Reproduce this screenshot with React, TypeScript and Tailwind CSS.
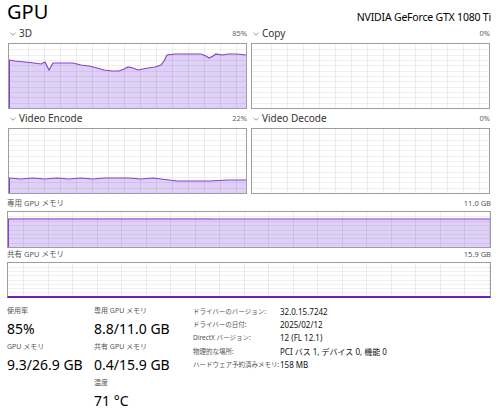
import React from 'react';

type Pt = [number, number];

const FONT = { fontFamily: '"Noto Sans", "Noto Sans CJK JP", sans-serif' };

const pts3d: Pt[] = [
  [0, 16], [6, 17], [16, 18], [25, 19], [32, 20], [36, 18], [40, 26], [44, 19], [56, 19], [64, 19],
  [72, 21], [80, 22], [88, 24], [95, 26], [103, 27], [110, 27], [115, 25], [119, 23], [124, 24],
  [129, 26], [134, 25], [139, 24], [146, 23], [152, 21], [155, 17], [158, 11], [166, 10], [174, 10],
  [182, 10], [192, 10], [197, 12], [200, 14], [204, 12], [207, 10], [213, 11], [219, 10], [228, 10], [237, 11],
];

const ptsEncode: Pt[] = [
  [0, 49], [12, 50], [24, 49], [36, 50], [48, 49], [60, 50], [72, 49], [84, 50], [96, 49], [108, 49],
  [120, 49], [132, 50], [144, 49], [152, 50], [160, 51], [168, 52], [200, 52], [220, 51], [237, 51],
];

interface ChartProps {
  w: number;
  h: number;
  colStep: number;
  colOffset: number;
  rows: number;
  points?: Pt[];
}

const Chart: React.FC<ChartProps> = ({ w, h, colStep, colOffset, rows, points }) => {
  const cols: number[] = [];
  for (let x = colOffset; x < w; x += colStep) cols.push(x);
  const rowLines: number[] = [];
  for (let i = 1; i < rows; i++) rowLines.push((h * i) / rows);

  const line = points ? points.map(([x, y]) => `${x},${y}`).join(' ') : '';
  const area = points ? `0,${h} ${line} ${w},${h}` : '';

  return (
    <svg width={w} height={h} className="block">
      {points && <polygon points={area} fill="#dfd0f7" />}
      {cols.map((x) => (
        <line key={`c${x}`} x1={Math.round(x) + 0.5} x2={Math.round(x) + 0.5} y1={0} y2={h} stroke="rgba(0,0,0,0.07)" />
      ))}
      {rowLines.map((y) => (
        <line key={`r${y}`} x1={0} x2={w} y1={Math.round(y) + 0.5} y2={Math.round(y) + 0.5} stroke="rgba(0,0,0,0.06)" />
      ))}
      {points && (
        <>
          <polyline points={line} fill="none" stroke="#8a3fd8" strokeWidth={1.2} />
          <line x1={0.5} x2={0.5} y1={points[0][1]} y2={h} stroke="#8a3fd8" />
        </>
      )}
    </svg>
  );
};

const Chevron: React.FC = () => (
  <svg width="6" height="4" viewBox="0 0 6 4" className="mr-[3px]">
    <path d="M0.5 0.8 L3 3.2 L5.5 0.8" fill="none" stroke="#8a8a8a" strokeWidth="0.9" />
  </svg>
);

const EngineCell: React.FC<{ name: string; pct: string; points?: Pt[] }> = ({ name, pct, points }) => (
  <div>
    <div className="h-[19px] flex items-center justify-between">
      <div className="flex items-center pl-[2px]">
        <Chevron />
        <span className="text-[10px] text-[#333]">{name}</span>
      </div>
      <span className="text-[7.5px] text-[#666]">{pct}</span>
    </div>
    <div className="w-[239px] h-[66px] border border-[#9e9e9e] bg-white">
      <Chart w={237} h={64} colStep={16} colOffset={19} rows={12} points={points} />
    </div>
  </div>
);

const Stat: React.FC<{ label: string; value: string }> = ({ label, value }) => (
  <div className="h-[36px]">
    <div className="h-[14px] flex items-center text-[7px] text-[#555]">{label}</div>
    <div className="h-[22px] flex items-center text-[14px] text-black leading-none">{value}</div>
  </div>
);

const details: [string, string][] = [
  ['ドライバーのバージョン:', '32.0.15.7242'],
  ['ドライバーの日付:', '2025/02/12'],
  ['DirectX バージョン:', '12 (FL 12.1)'],
  ['物理的な場所:', 'PCI バス 1, デバイス 0, 機能 0'],
  ['ハードウェア予約済みメモリ:', '158 MB'],
];

export default function App() {
  return (
    <div className="w-[500px] h-[413px] bg-white overflow-hidden pl-[7px]" style={FONT}>
      <div className="h-[24px] w-[484px] flex items-start justify-between pt-[2px]">
        <span className="text-[20px] leading-[20px] text-black">GPU</span>
        <span className="text-[10.5px] leading-[14px] text-black mt-[8px] tracking-[-0.2px]">NVIDIA GeForce GTX 1080 Ti</span>
      </div>

      <div className="grid grid-cols-[239px_239px] gap-x-[4px] pl-px">
        <EngineCell name="3D" pct="85%" points={pts3d} />
        <EngineCell name="Copy" pct="0%" />
        <EngineCell name="Video Encode" pct="22%" points={ptsEncode} />
        <EngineCell name="Video Decode" pct="0%" />
      </div>

      <div className="w-[484px]">
        <div className="h-[17px] flex items-end justify-between pb-[2px] text-[7.5px] text-[#555]">
          <span>専用 GPU メモリ</span>
          <span>11.0 GB</span>
        </div>
        <div className="relative h-[37px] border border-[#9e9e9e] bg-white">
          <Chart w={482} h={35} colStep={24.5} colOffset={15} rows={8} points={[[0, 7], [482, 7]]} />
          <div className="absolute left-0 top-[6px] w-[205px] h-px bg-[#b48ae6]" />
        </div>
        <div className="h-[14px] flex items-end justify-between pb-[2px] text-[7.5px] text-[#555]">
          <span>共有 GPU メモリ</span>
          <span>15.9 GB</span>
        </div>
        <div className="h-[36px] border border-[#9e9e9e] border-b-[#6a24b8] border-b-2 bg-white">
          <Chart w={482} h={33} colStep={24.5} colOffset={15} rows={8} />
        </div>
      </div>

      <div className="flex pt-[6px]">
        <div className="w-[87px]">
          <Stat label="使用率" value="85%" />
          <Stat label="GPU メモリ" value="9.3/26.9 GB" />
        </div>
        <div className="w-[99px]">
          <Stat label="専用 GPU メモリ" value="8.8/11.0 GB" />
          <Stat label="共有 GPU メモリ" value="0.4/15.9 GB" />
          <Stat label="温度" value="71 °C" />
        </div>
        <div className="pt-[1px]">
          {details.map(([k, v]) => (
            <div key={k} className="flex h-[13.3px] items-center">
              <span className="w-[87px] text-[6.5px] text-[#555] whitespace-nowrap">{k}</span>
              <span className="text-[8px] text-[#111] whitespace-nowrap">{v}</span>
            </div>
          ))}
        </div>
      </div>
    </div>
  );
}
